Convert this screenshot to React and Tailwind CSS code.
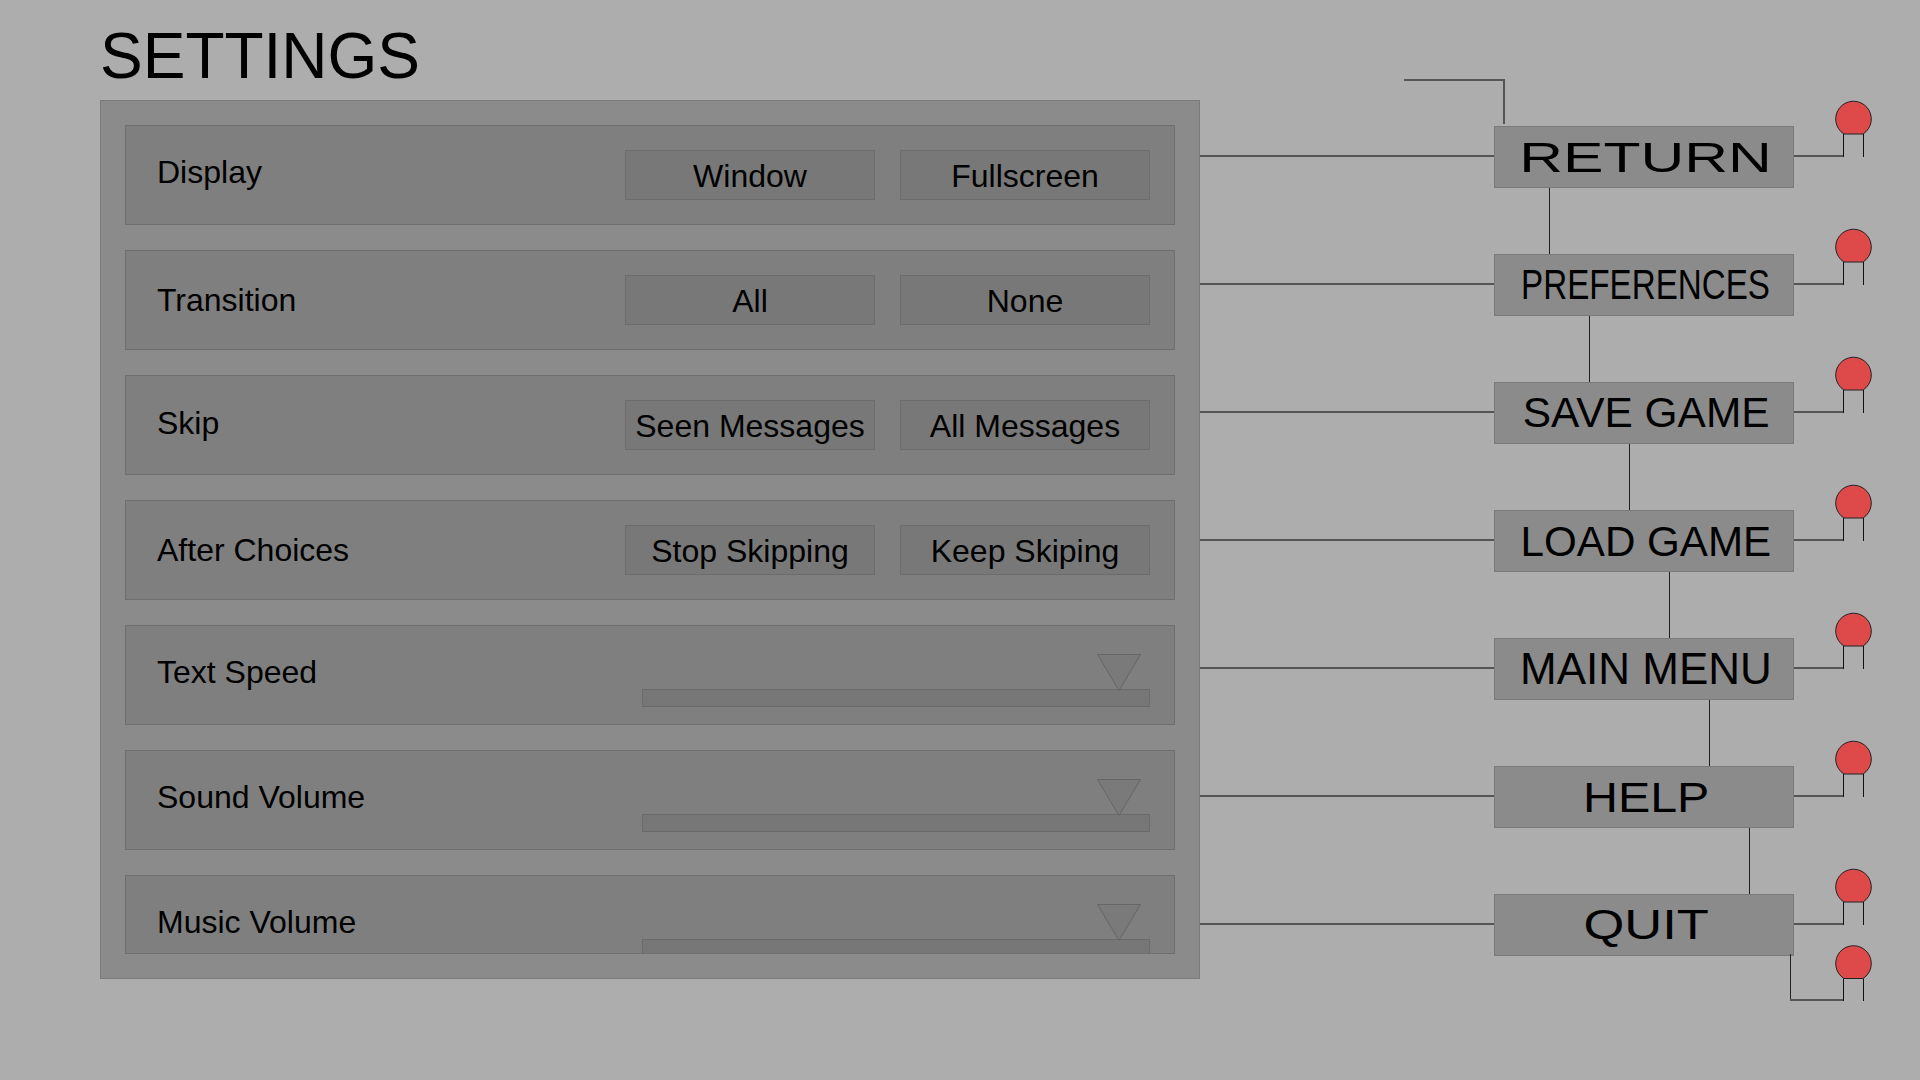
import React from "react";

const rows = [
  { label: "Display", opts: ["Window", "Fullscreen"], lc: "mb-[6px]" },
  { label: "Transition", opts: ["All", "None"], lc: "mb-[0px]" },
  { label: "Skip", opts: ["Seen Messages", "All Messages"], lc: "mb-[4px]" },
  { label: "After Choices", opts: ["Stop Skipping", "Keep Skiping"], lc: "mb-[0px]" },
  { label: "Text Speed", slider: true, lc: "mb-[6px]" },
  { label: "Sound Volume", slider: true, lc: "mb-[6px]" },
  { label: "Music Volume", slider: true, lc: "mb-[6px]" },
];

const menu = [
  { label: "RETURN", cls: "text-[43px] scale-x-[1.41]" },
  { label: "PREFERENCES", cls: "text-[42px] scale-x-[0.79]" },
  { label: "SAVE GAME", cls: "text-[42px] scale-x-[1.01]" },
  { label: "LOAD GAME", cls: "text-[43px] scale-x-[0.98]" },
  { label: "MAIN MENU", cls: "text-[44px] scale-x-[1]" },
  { label: "HELP", cls: "text-[43px] scale-x-[1.125]" },
  { label: "QUIT", cls: "text-[42px] scale-x-[1.25]" },
];

const gapLines = ["ml-[349px]", "ml-[389px]", "ml-[429px]", "ml-[469px]", "ml-[509px]", "ml-[549px]"];

function Led() {
  return (
    <svg
      className="absolute left-[594px] top-[-25px] overflow-visible"
      width="80"
      height="60"
      viewBox="0 0 80 60"
    >
      <line x1="0" y1="55" x2="50" y2="55" stroke="#555555" strokeWidth="2" />
      <path d="M 49.9 33 A 17.8 17.8 0 1 1 69.1 33 Z" fill="#de4a4a" stroke="#222222" strokeWidth="1" />
      <line x1="49.5" y1="33" x2="49.5" y2="56" stroke="#111111" strokeWidth="1" />
      <line x1="69.5" y1="33" x2="69.5" y2="56" stroke="#111111" strokeWidth="1" />
    </svg>
  );
}

function ExtraLed() {
  return (
    <svg
      className="absolute left-[590px] top-[40px] overflow-visible"
      width="90"
      height="70"
      viewBox="0 0 90 70"
    >
      <line x1="0.5" y1="20" x2="0.5" y2="66" stroke="#222222" strokeWidth="1" />
      <line x1="0" y1="66" x2="54" y2="66" stroke="#555555" strokeWidth="2" />
      <path d="M 53.9 44.5 A 17.8 17.8 0 1 1 73.1 44.5 Z" fill="#de4a4a" stroke="#222222" strokeWidth="1" />
      <line x1="53.5" y1="44.5" x2="53.5" y2="67" stroke="#111111" strokeWidth="1" />
      <line x1="73.5" y1="44.5" x2="73.5" y2="67" stroke="#111111" strokeWidth="1" />
    </svg>
  );
}

function SettingRow({ row }) {
  return (
    <div className="flex h-[100px] shrink-0 items-center border border-[#6e6e6e] bg-[#7f7f7f] pl-[31px] pr-[24px]">
      <div className={"text-[32px] text-black " + row.lc}>{row.label}</div>
      {row.slider ? (
        <div className="ml-auto flex flex-col justify-end self-stretch pb-[17px]">
          <div className="relative h-[18px] w-[508px] border border-[#6a6a6a] bg-[#777777]">
            <svg className="absolute left-[454px] top-[-36px]" width="44" height="37" viewBox="0 0 44 37">
              <polygon points="0.5,0.5 43.5,0.5 22,36.5" fill="#7a7a7a" stroke="#666666" strokeWidth="1" />
            </svg>
          </div>
        </div>
      ) : (
        <div className="ml-auto flex gap-[25px]">
          {row.opts.map((o) => (
            <div
              key={o}
              className="flex h-[50px] w-[250px] items-center justify-center border border-[#6c6c6c] bg-[#787878] pt-[2px] text-[32px] text-black"
            >
              {o}
            </div>
          ))}
        </div>
      )}
    </div>
  );
}

export default function App() {
  return (
    <div className="flex h-[1080px] w-[1920px] overflow-hidden bg-[#adadad] font-['Liberation_Sans',Arial,sans-serif] text-black">
      {/* Left column */}
      <div className="ml-[100px] flex w-[1100px] shrink-0 flex-col">
        <div className="mb-[12px] mt-[24px] h-[64px] text-[64px] leading-[64px]">SETTINGS</div>
        <div className="h-[879px] border border-[#7b7b7b] bg-[#8b8b8b] p-[24px]">
          <div className="flex h-[829px] flex-col gap-[25px] overflow-hidden border-b border-[#6e6e6e]">
            {rows.map((r) => (
              <SettingRow key={r.label} row={r} />
            ))}
          </div>
        </div>
      </div>

      {/* Right column */}
      <div className="flex flex-1 flex-col">
        <div className="h-[126px] pl-[204px] pt-[79px]">
          <div className="h-[45px] w-[101px] border-r-2 border-t-2 border-[#555555]" />
        </div>
        {menu.map((m, i) => (
          <React.Fragment key={m.label}>
            <div className="relative flex h-[62px] shrink-0">
              <div className="mt-[29px] h-[2px] w-[294px] bg-[#555555]" />
              <div className="flex h-[62px] w-[300px] items-center justify-center border border-[#7a7a7a] bg-[#8b8b8b] pl-[4px]">
                <span className={"inline-block whitespace-nowrap leading-none " + m.cls}>{m.label}</span>
              </div>
              <Led />
              {i === menu.length - 1 && <ExtraLed />}
            </div>
            {i < menu.length - 1 && (
              <div className="h-[66px] shrink-0">
                <div className={"h-full w-px bg-[#1e1e1e] " + gapLines[i]} />
              </div>
            )}
          </React.Fragment>
        ))}
      </div>
    </div>
  );
}
